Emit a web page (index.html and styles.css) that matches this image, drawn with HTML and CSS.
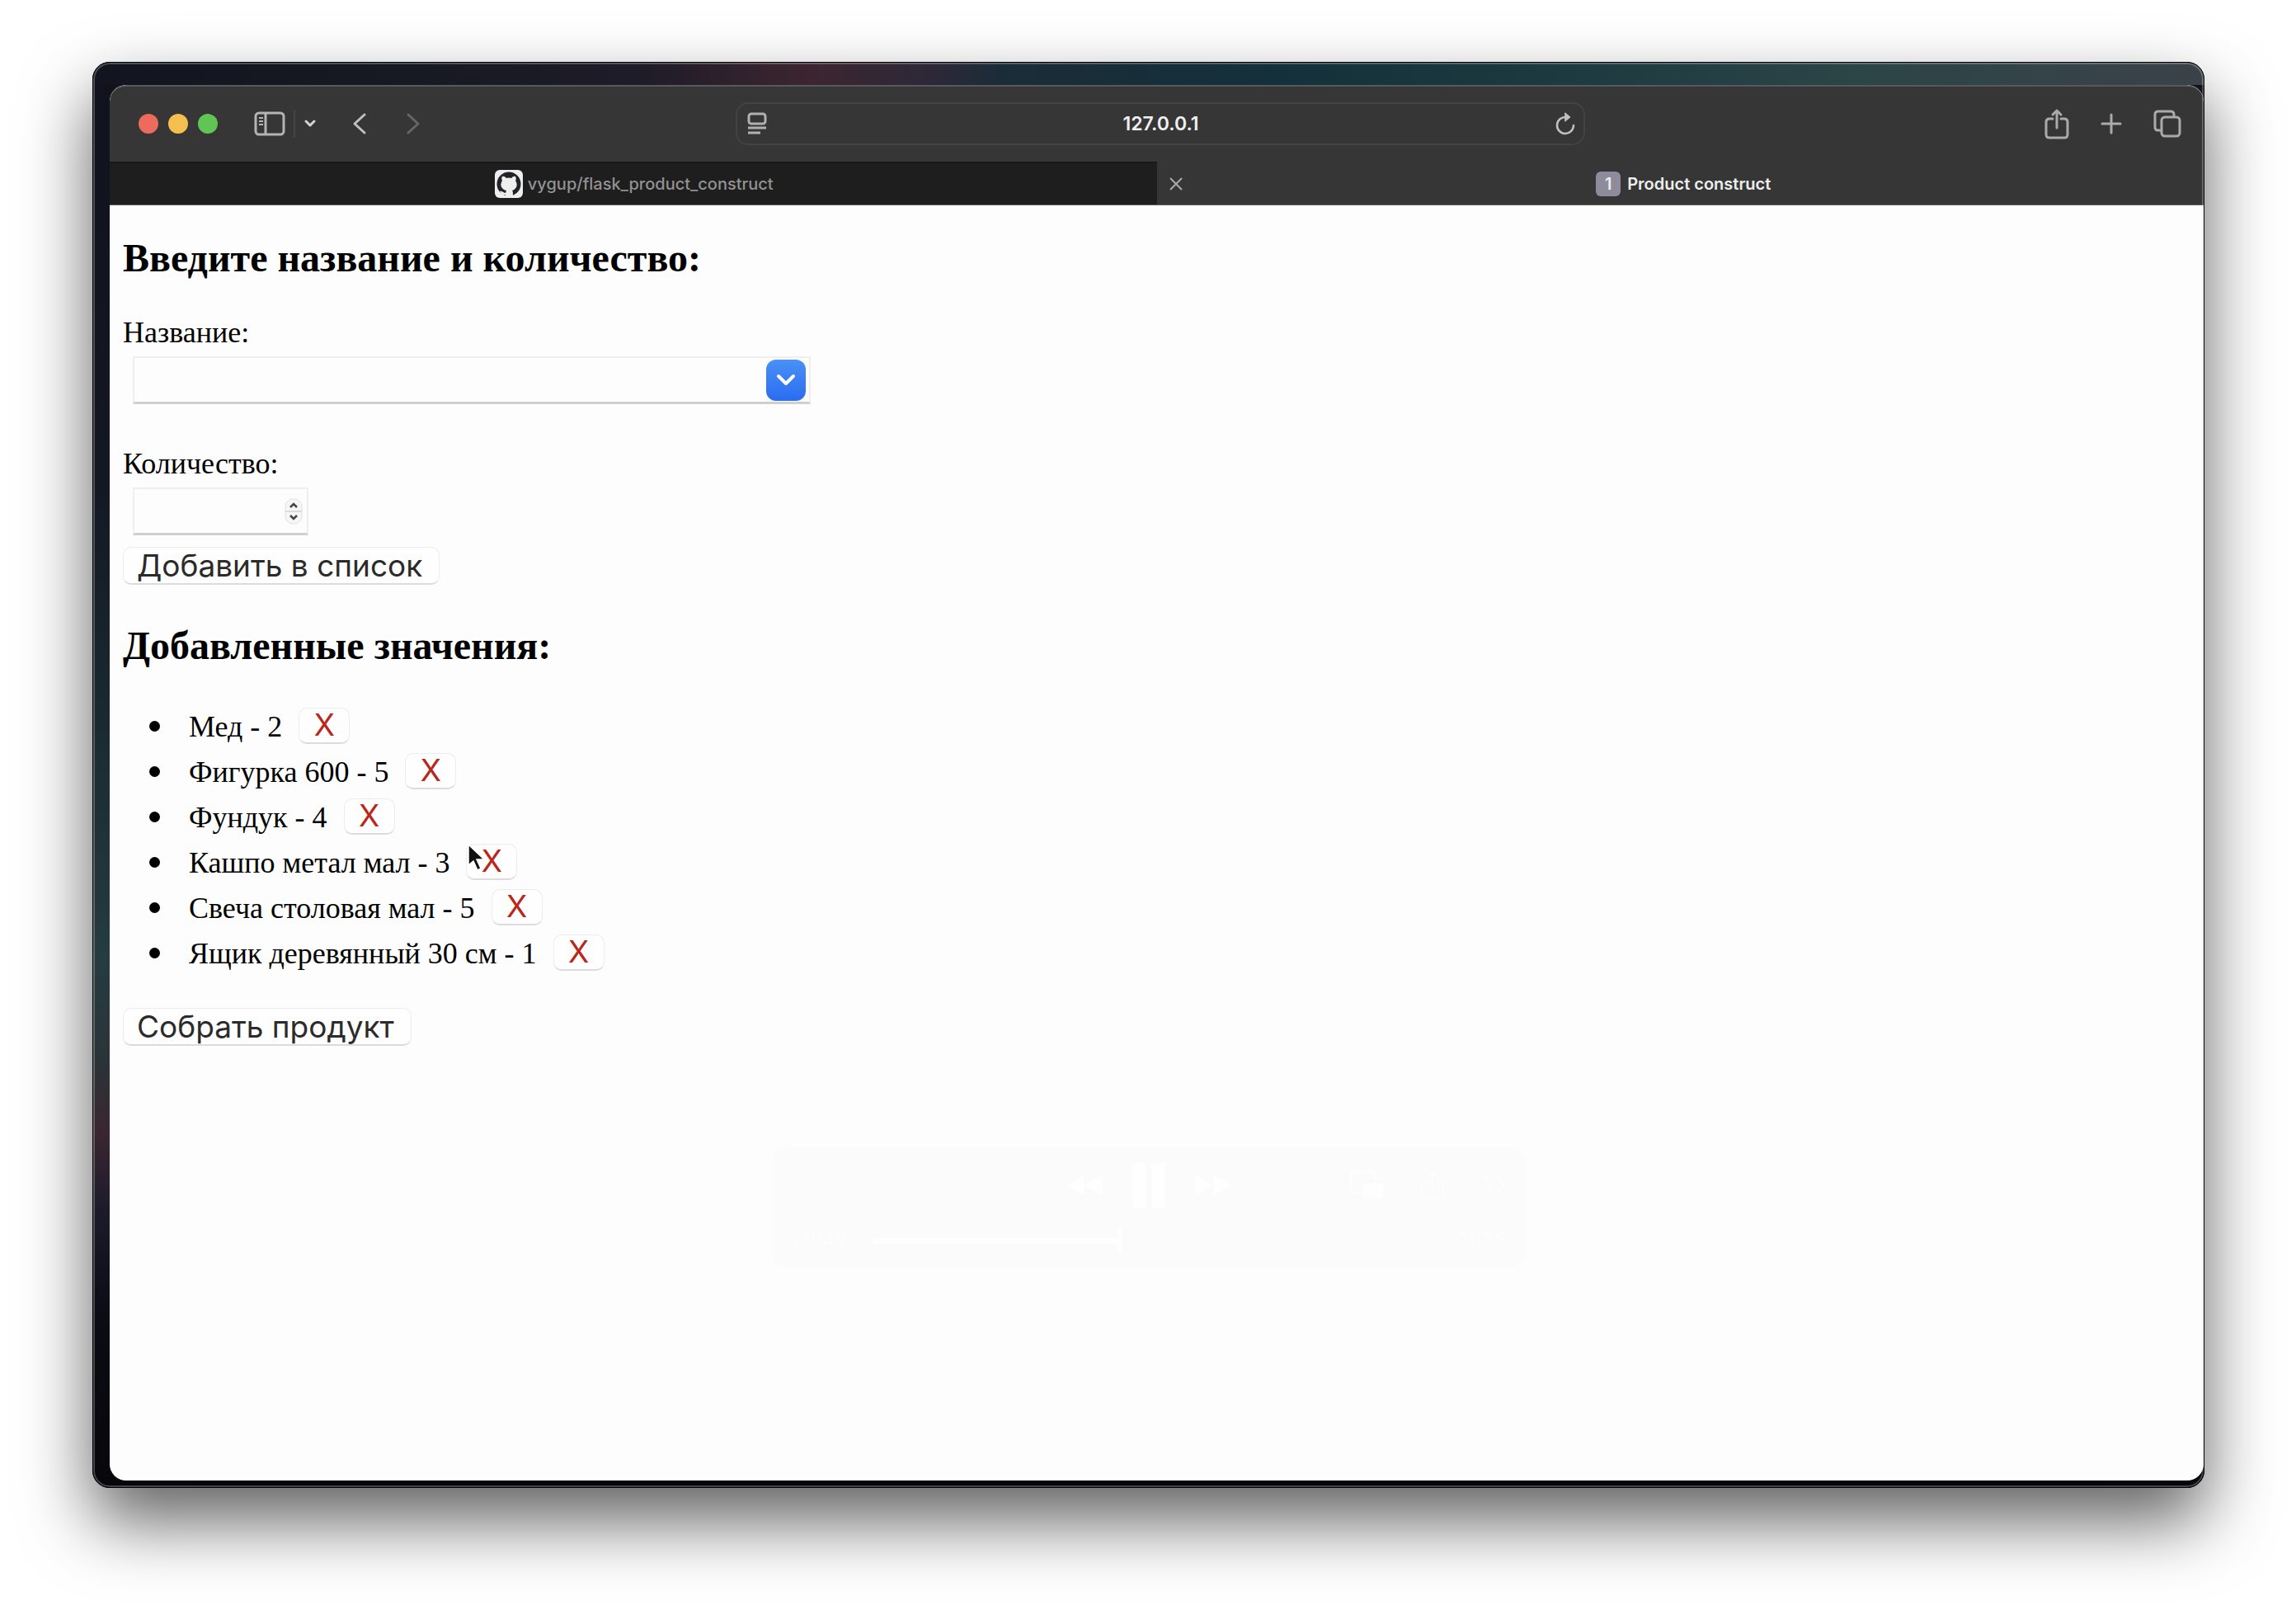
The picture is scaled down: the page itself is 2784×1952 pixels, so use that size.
FILE: index.html
```html
<!DOCTYPE html>
<html lang="ru">
<head>
<meta charset="utf-8">
<title>Product construct</title>
<link rel="stylesheet" href="styles.css">
</head>
<body>
<main class="player">
  <section class="browser">
    <header class="toolbar">
      <div class="side left">
        <div class="lights"><span class="light red"></span><span class="light yellow"></span><span class="light green"></span></div>
        <button class="tool sidebar" aria-label="Боковая панель"><svg width="38" height="30" viewBox="0 0 38 30" fill="none" stroke="#b4b4b4" stroke-width="3"><rect x="2" y="2" width="34" height="26" rx="4"/><path d="M14 2v26"/><path d="M6 8h5M6 12h5M6 16h5" stroke-width="2"/></svg></button>
        <span class="divider"></span>
        <button class="tool menu" aria-label="Меню"><svg width="16" height="12" viewBox="0 0 16 12" fill="none" stroke="#d4d4d4" stroke-width="3" stroke-linecap="round" stroke-linejoin="round"><path d="M3 3l5 5 5-5"/></svg></button>
        <button class="tool back" aria-label="Назад"><svg width="18" height="28" viewBox="0 0 18 28" fill="none" stroke="#c0c0c0" stroke-width="3" stroke-linecap="round" stroke-linejoin="round"><path d="M15 3L3 14l12 11"/></svg></button>
        <button class="tool forward" aria-label="Вперёд"><svg width="18" height="28" viewBox="0 0 18 28" fill="none" stroke="#666" stroke-width="3" stroke-linecap="round" stroke-linejoin="round"><path d="M3 3l12 11L3 25"/></svg></button>
      </div>
      <div class="address">
        <svg width="24" height="28" viewBox="0 0 24 28" fill="none" stroke="#b0b0b0" stroke-width="3"><rect x="2" y="2" width="20" height="12" rx="3"/><path d="M1 19h22M1 25h15"/></svg>
        <span>127.0.0.1</span>
        <svg width="24" height="28" viewBox="0 0 24 28" fill="none" stroke="#c0c0c0" stroke-width="2.5" stroke-linecap="round" stroke-linejoin="round"><path d="M13 6A10 10 0 1 0 22 16"/><path d="M12 1l6 5-6 5z" fill="#c0c0c0" stroke-width="1"/></svg>
      </div>
      <div class="side right">
        <button class="tool" aria-label="Поделиться"><svg width="30" height="38" viewBox="0 0 30 38" fill="none" stroke="#aaa" stroke-width="3" stroke-linecap="round" stroke-linejoin="round"><path d="M10 13H6q-4 0-4 4v15q0 4 4 4h18q4 0 4-4V17q0-4-4-4h-4M15 24V3M10 8l5-5 5 5"/></svg></button>
        <button class="tool" aria-label="Новая вкладка"><svg width="26" height="26" viewBox="0 0 26 26" fill="none" stroke="#aaa" stroke-width="3" stroke-linecap="round"><path d="M13 2v22M2 13h22"/></svg></button>
        <button class="tool" aria-label="Обзор вкладок"><svg width="34" height="34" viewBox="0 0 34 34" fill="none" stroke="#aaa" stroke-width="3"><rect x="10" y="9" width="22" height="23" rx="4"/><path d="M10 25H6q-4 0-4-4V6q0-4 4-4h15q4 0 4 4v3"/></svg></button>
      </div>
    </header>
    <nav class="tabs">
      <a class="tab" href="#"><svg width="34" height="34" viewBox="0 0 34 34"><rect width="34" height="34" rx="6" fill="#eee"/><circle cx="17" cy="17" r="14.5" fill="#20242a"/><path fill="#eee" d="M9 8c2-1 4 1 5 2q3-1 6 0c1-1 3-3 5-2 1 2 1 4 0 5 4 6 0 11-4 12 1 1 1 2 1 9H13v-4c-4 1-5-2-7-4 3-1 4 2 7 2l1-3c-5-1-9-6-5-12-1-2-1-3 0-5z"/></svg><span>vygup/flask_product_construct</span></a>
      <div class="tab active">
        <button class="tool close" aria-label="Закрыть"><svg width="16" height="16" viewBox="0 0 16 16" stroke="#aaa" stroke-width="2"><path d="M1 1l14 14M15 1L1 15"/></svg></button>
        <span class="badge">1</span><span>Product construct</span>
      </div>
    </nav>
    <div class="page">
      <h2>Введите название и количество:</h2>
      <form>
        <label for="name">Название:</label>
        <div class="field name"><input id="name" type="text"><button type="button" class="drop" aria-label="Показать список"><svg width="24" height="16" viewBox="0 0 24 16" fill="none" stroke="#fff" stroke-width="4" stroke-linecap="round" stroke-linejoin="round"><path d="M3 3l9 9 9-9"/></svg></button></div>
        <label for="count">Количество:</label>
        <div class="field count"><input id="count" type="number"><svg width="22" height="32" viewBox="0 0 22 32"><rect x="1" y="1" width="20" height="30" rx="9" fill="#f6f6f6" stroke="#e2e2e2"/><path d="M1 16h20" stroke="#dcdcdc" stroke-width="2"/><path d="M7 11l4-4 4 4M7 21l4 4 4-4" fill="none" stroke="#444" stroke-width="2.5"/></svg></div>
        <button type="button" class="push">Добавить в список</button>
      </form>
      <h2>Добавленные значения:</h2>
      <ul>
        <li><span>Мед - 2</span><button class="remove">X</button></li>
        <li><span>Фигурка 600 - 5</span><button class="remove">X</button></li>
        <li><span>Фундук - 4</span><button class="remove">X</button></li>
        <li><span>Кашпо метал мал - 3</span><button class="remove">X<svg class="cursor" width="22" height="36" viewBox="0 0 22 36"><path d="M2 2v25l6-5 5 11 4-2-5-11h9z" fill="#111" stroke="#fff" stroke-width="1.5"/></svg></button></li>
        <li><span>Свеча столовая мал - 5</span><button class="remove">X</button></li>
        <li><span>Ящик деревянный 30 см - 1</span><button class="remove">X</button></li>
      </ul>
      <button class="push">Собрать продукт</button>
    </div>
  </section>
  <aside class="controls">
    <div class="keys">
      <div class="transport">
        <svg width="44" height="28" viewBox="0 0 44 28"><path d="M22 1v26L0 14zM44 1v26L22 14z"/></svg>
        <svg width="40" height="54" viewBox="0 0 40 54"><rect width="17" height="54" rx="3"/><rect x="23" width="17" height="54" rx="3"/></svg>
        <svg width="44" height="28" viewBox="0 0 44 28"><path d="M0 1v26l22-13zM22 1v26l22-13z"/></svg>
      </div>
      <div class="extras">
        <svg width="42" height="36" viewBox="0 0 42 36"><path d="M14 27H5q-3 0-3-3V5q0-3 3-3h24q3 0 3 3v8" fill="none" stroke="#fefefe" stroke-width="3"/><rect x="16" y="15" width="26" height="20" rx="3"/></svg>
        <svg width="30" height="38" viewBox="0 0 30 38" fill="none" stroke="#fdfdfd" stroke-width="2"><path d="M10 13H6q-4 0-4 4v15q0 4 4 4h18q4 0 4-4V17q0-4-4-4h-4M15 24V3M10 8l5-5 5 5" fill="none"/></svg>
        <svg width="30" height="28" viewBox="0 0 30 28"><path d="M2 1l12 13L2 27M16 1l12 13-12 13" fill="none" stroke="#fdfdfd" stroke-width="2"/></svg>
      </div>
    </div>
    <div class="timeline"><span>00:42</span><div class="track"><div class="played" style="width:44%"></div><div class="knob"></div></div><span>01:35</span></div>
  </aside>
</main>
</body>
</html>
```
FILE: styles.css
```css
* { box-sizing: border-box; }

body {
  margin: 0;
  min-height: 100vh;
  padding: 75px 111px 148px 112px;
  display: flex;
  background: #fff;
  overflow: hidden;
}

button { border: 0; padding: 0; margin: 0; font: inherit; color: inherit; }
svg { display: block; flex: none; }

.player {
  position: relative;
  flex: 1;
  display: flex;
  border-radius: 21px;
  padding: 28px 1px 9px 21px;
  background:
    linear-gradient(90deg, #12141f 0, #171923 16%, #1e1c28 26%, #3c2530 34%, #2c2838 40%, #1a2c38 43%, #14303a 56%, #1d3a40 70%, #2c4547 84%, #3b4249 100%) top / 100% 28px no-repeat,
    linear-gradient(#10121c 0, #141824 30%, #18262f 43%, #253c40 63%, #2a3438 70%, #3a2630 75%, #1a1a2a 81%, #0b0c14 88%, #07070b 100%);
  box-shadow: 0 40px 84px rgba(0, 0, 0, .62);
}

.player::after {
  content: "";
  position: absolute;
  inset: 0;
  border: 1px solid #000;
  border-radius: 21px;
  box-shadow: inset 0 0 0 2px rgba(255, 255, 255, .25);
  pointer-events: none;
}

.browser {
  flex: 1;
  display: flex;
  flex-direction: column;
  min-width: 0;
  overflow: hidden;
  border-radius: 20px;
  background: #fdfdfd;
}

.toolbar {
  height: 93px;
  display: flex;
  align-items: center;
  justify-content: space-between;
  padding: 0 27px 2px 35px;
  background: #363636;
  border-top: 2px solid #58595b;
  border-radius: 20px 20px 0 0;
}

.tool { display: flex; background: none; }
.side { flex: 1; display: flex; align-items: center; }
.right { justify-content: flex-end; gap: 38px; }
.lights { display: flex; gap: 12px; }
.light { width: 24px; height: 24px; border-radius: 50%; }
.red { background: #ec6a5e; }
.yellow { background: #f4bf4f; }
.green { background: #61c554; }
.sidebar { margin-left: 44px; }
.divider { width: 2px; height: 34px; margin: 0 10px; background: #444; }
.back { margin-left: 43px; }
.forward { margin-left: 47px; }

.address {
  width: 1030px;
  height: 52px;
  display: flex;
  align-items: center;
  justify-content: space-between;
  padding: 0 10px 0 12px;
  border: 2px solid #434343;
  border-radius: 15px;
  color: #f0f0f0;
  font: 600 23px/28px Inter, sans-serif;
}

.tabs {
  display: flex;
  height: 53px;
  background: #1e1e1e;
  border-bottom: 1px solid #666;
  font: 500 20px/28px Inter, sans-serif;
}

.tab {
  width: 50%;
  position: relative;
  display: flex;
  align-items: center;
  justify-content: center;
  gap: 6px;
  padding: 2px 0 0 2px;
  color: #929292;
  text-decoration: none;
  box-shadow: inset 0 2px #181818;
}

.tab.active { padding-left: 8px; background: #363636; color: #eee; box-shadow: none; gap: 8px; font-weight: 600; }
.close { position: absolute; left: 15px; }

.badge {
  width: 30px;
  border-radius: 6px;
  background: #8e8c9c;
  text-align: center;
  line-height: 30px;
}

.page {
  padding: 36px 16px;
  color: #000;
  font: 36px/40px "Liberation Serif", serif;
}

.page h2 { margin: 0; font-size: 48px; line-height: 56px; }
.page label { display: block; margin-top: 42px; }

.field {
  height: 58px;
  display: flex;
  align-items: center;
  margin: 9px 0 0 12px;
  border: 2px solid #efefef;
  border-bottom: 3px solid #d0d0d0;
}

.field + label { margin-top: 52px; }
.field input { flex: 1; min-width: 0; height: 100%; border: 0; outline: 0; background: none; font: inherit; appearance: textfield; }
.field input::-webkit-inner-spin-button { display: none; }
.field svg { margin: 0 5px; }
.name { width: 822px; }
.count { width: 213px; }

.drop {
  width: 48px;
  height: 50px;
  margin-right: 4px;
  display: flex;
  align-items: center;
  justify-content: center;
  border-radius: 12px;
  background: linear-gradient(#4a91f7, #2a6cf0);
}

.push, .remove {
  background: #fefefe;
  border: 1px solid #ececec;
  border-bottom: 2px solid #dcdcdc;
  border-radius: 10px;
  color: #2b2b2b;
  font: 37px/40px Inter, sans-serif;
}

.push { height: 46px; padding: 0 20px 0 16px; display: block; }
form .push { margin: 14px 0 46px; }

.page ul { margin: 42px 0 39px; padding: 0 0 0 32px; list-style: none; }
.page li { height: 55px; display: flex; align-items: center; }
.page li::before { content: ""; width: 13px; height: 13px; margin-right: 35px; border-radius: 50%; background: #000; }
.remove { position: relative; width: 62px; height: 44px; margin: 0 0 2px 20px; color: #bb261a; }
.cursor { position: absolute; left: 0; top: -2px; }

.controls {
  position: absolute;
  left: 50%;
  bottom: 267px;
  width: 914px;
  height: 146px;
  margin-left: -457px;
  padding: 18px 24px;
  border-radius: 20px;
  background: #fbfbfb;
  color: #fdfdfd;
  fill: #fefefe;
  font: 24px/28px Inter, sans-serif;
}

.keys { height: 56px; display: flex; align-items: center; justify-content: center; }
.transport { display: flex; align-items: center; gap: 36px; }
.extras { position: absolute; right: 24px; display: flex; align-items: center; gap: 44px; }
.timeline { display: flex; align-items: center; gap: 30px; margin-top: 24px; }
.track { flex: 1; display: flex; align-items: center; }
.played { height: 7px; border-radius: 4px 0 0 4px; background: #fefefe; }
.knob { width: 6px; height: 30px; border-radius: 3px; background: #fefefe; }
```
